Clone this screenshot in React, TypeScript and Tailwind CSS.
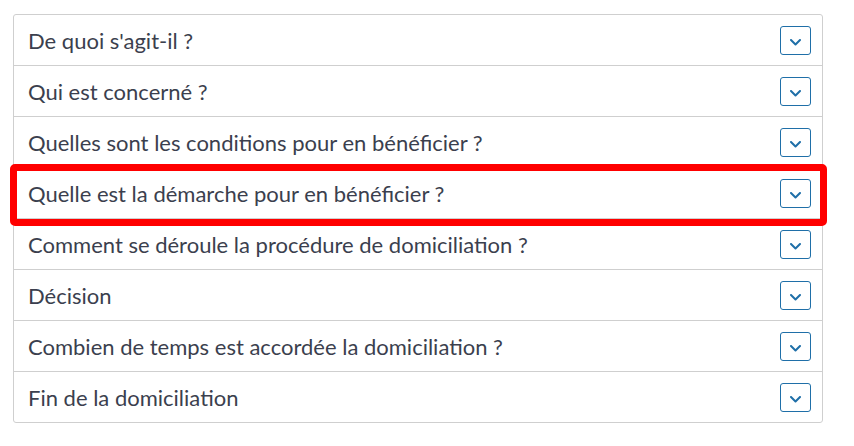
const questions = [
  "De quoi s'agit-il ?",
  "Qui est concerné ?",
  "Quelles sont les conditions pour en bénéficier ?",
  "Quelle est la démarche pour en bénéficier ?",
  "Comment se déroule la procédure de domiciliation ?",
  "Décision",
  "Combien de temps est accordée la domiciliation ?",
  "Fin de la domiciliation",
];

const Chevron = () => (
  <svg width="11" height="7" viewBox="0 0 11 7" fill="none" className="mt-[4px]">
    <path d="M1 1l4.5 4.5L10 1" stroke="currentColor" strokeWidth="2" strokeLinecap="round" strokeLinejoin="round" />
  </svg>
);

export default function App() {
  return (
    <div className="min-h-[446px] w-[854px] bg-white pt-[14px] pl-[13px] font-['Lato','Liberation_Sans',sans-serif]">
      <div className="relative w-[810px] rounded-[3px] border border-[#cfcfcf]">
        {questions.map((q, i) => (
          <div
            key={q}
            className={`flex items-center justify-between pl-[14px] pr-[11px] ${
              i < questions.length - 1 ? "h-[51px] border-b border-[#cfcfcf]" : "h-[50px]"
            }`}
          >
            <span className="text-[22px] text-[#3b3f4e]">{q}</span>
            <button className="flex h-[29px] w-[31px] items-center justify-center rounded-[3px] border border-[#1f6fa8] text-[#1f6fa8]">
              <Chevron />
            </button>
          </div>
        ))}
        {/* highlight over the 4th question */}
        <div className="pointer-events-none absolute left-[-4px] top-[149px] h-[62px] w-[817px] rounded-[5px] border-[7px] border-[#ff0000]" />
      </div>
    </div>
  );
}
